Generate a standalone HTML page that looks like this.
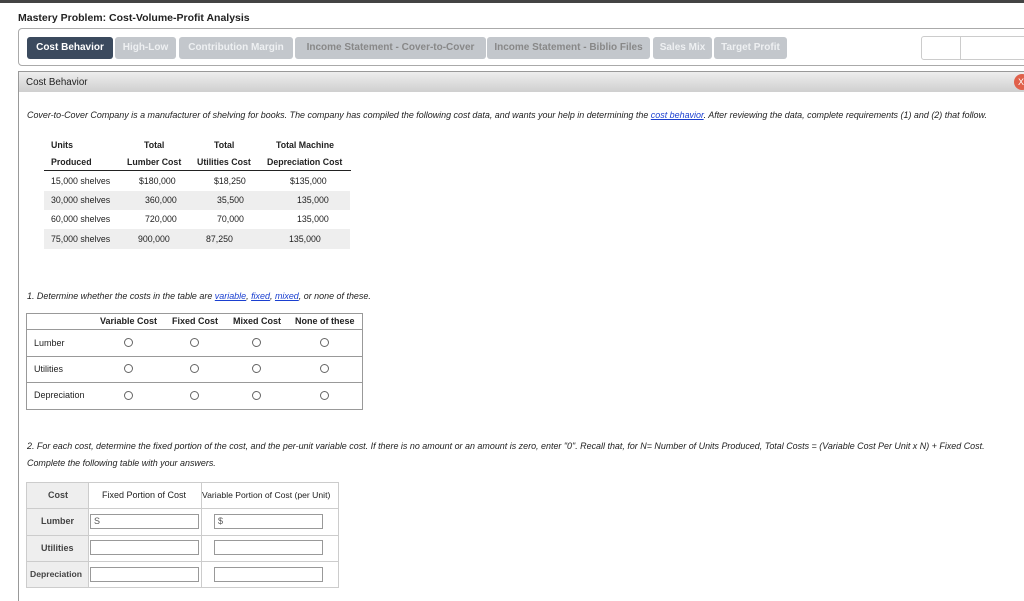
<!DOCTYPE html>
<html><head><meta charset="utf-8"><style>
*{margin:0;padding:0;box-sizing:border-box}
body{width:1024px;height:598px;overflow:hidden;background:#fff;font-family:"Liberation Sans",sans-serif;color:#222;position:relative}
.a{position:absolute;white-space:nowrap}
.tab{position:absolute;top:37px;height:22px;border-radius:3px;background:#c3c7cc;color:#eef0f2;font-weight:bold;font-size:10px;line-height:22px;text-align:center}
.it{font-style:italic;font-size:8.95px}
a{color:#1a3fd0;text-decoration:underline}
.t{font-size:8.8px}
.b{font-weight:bold}
.r{position:absolute;width:9px;height:9px;border:1px solid #666;border-radius:50%}
.inp{position:absolute;height:15px;border:1px solid #999;background:#fff;font-size:9px;color:#555;padding-left:3px;line-height:13px}
.f9{font-size:9px}
</style></head><body>
<div class="a" style="left:0;top:0;width:1024px;height:3px;background:#444"></div>
<div class="a b" style="left:18px;top:12px;font-size:10.5px;color:#222">Mastery Problem: Cost-Volume-Profit Analysis</div>
<div class="a" style="left:18px;top:28px;width:1020px;height:38px;border:1px solid #aaa;border-radius:4px"></div>
<div class="tab" style="left:27px;width:86px;background:#3b4a5e;color:#fff">Cost Behavior</div>
<div class="tab" style="left:115px;width:61px">High-Low</div>
<div class="tab" style="left:179px;width:114px">Contribution Margin</div>
<div class="tab" style="left:295px;width:191px;color:#888">Income Statement - Cover-to-Cover</div>
<div class="tab" style="left:487px;width:163px;color:#888">Income Statement - Biblio Files</div>
<div class="tab" style="left:653px;width:59px">Sales Mix</div>
<div class="tab" style="left:714px;width:73px">Target Profit</div>
<div class="a" style="left:921px;top:36px;width:110px;height:24px;border:1px solid #ccc;border-radius:3px"></div>
<div class="a" style="left:960px;top:36px;width:1px;height:24px;background:#ccc"></div>
<div class="a" style="left:18px;top:71px;width:1010px;height:530px;border-left:1px solid #999;border-top:1px solid #999"></div>
<div class="a" style="left:19px;top:72px;width:1005px;height:20px;background:linear-gradient(#eee,#cfcfcf);font-size:9.8px;line-height:22px;padding-left:7px">Cost Behavior</div>
<div class="a" style="left:1014px;top:74px;width:16px;height:16px;border-radius:50%;background:#e0604a;color:#fff;font-size:9px;line-height:16px;padding-left:4px">X</div>
<div class="a" style="left:-6px;top:224px;font-size:20px;color:#222">)</div>
<div class="a it" style="left:27px;top:110px">Cover-to-Cover Company is a manufacturer of shelving for books. The company has compiled the following cost data, and wants your help in determining the <a>cost behavior</a>. After reviewing the data, complete requirements (1) and (2) that follow.</div>

<div class="a" style="left:44px;top:191px;width:306px;height:19px;background:#eee"></div>
<div class="a" style="left:44px;top:229px;width:306px;height:20px;background:#eee"></div>
<div class="a" style="left:44px;top:170px;width:307px;height:1px;background:#222"></div>
<div class="a t b" style="left:51px;top:140px">Units</div>
<div class="a t b" style="left:51px;top:157px">Produced</div>
<div class="a t b" style="left:144px;top:140px">Total</div>
<div class="a t b" style="left:127px;top:157px">Lumber Cost</div>
<div class="a t b" style="left:214px;top:140px">Total</div>
<div class="a t b" style="left:197px;top:157px">Utilities Cost</div>
<div class="a t b" style="left:276px;top:140px">Total Machine</div>
<div class="a t b" style="left:267px;top:157px">Depreciation Cost</div>
<div class="a t" style="left:51px;top:176px">15,000 shelves</div><div class="a t" style="left:139px;top:176px">$180,000</div><div class="a t" style="left:214px;top:176px">$18,250</div><div class="a t" style="left:290px;top:176px">$135,000</div>
<div class="a t" style="left:51px;top:195px">30,000 shelves</div><div class="a t" style="left:145px;top:195px">360,000</div><div class="a t" style="left:217px;top:195px">35,500</div><div class="a t" style="left:297px;top:195px">135,000</div>
<div class="a t" style="left:51px;top:214px">60,000 shelves</div><div class="a t" style="left:145px;top:214px">720,000</div><div class="a t" style="left:217px;top:214px">70,000</div><div class="a t" style="left:297px;top:214px">135,000</div>
<div class="a t" style="left:51px;top:234px">75,000 shelves</div><div class="a t" style="left:138px;top:234px">900,000</div><div class="a t" style="left:206px;top:234px">87,250</div><div class="a t" style="left:289px;top:234px">135,000</div>

<div class="a it" style="left:27px;top:291px">1. Determine whether the costs in the table are <a>variable</a>, <a>fixed</a>, <a>mixed</a>, or none of these.</div>
<div class="a" style="left:26px;top:313px;width:337px;height:97px;border:1px solid #999"></div>
<div class="a" style="left:26px;top:329px;width:337px;height:1px;background:#999"></div>
<div class="a" style="left:26px;top:356px;width:337px;height:1px;background:#999"></div>
<div class="a" style="left:26px;top:382px;width:337px;height:1px;background:#999"></div>
<div class="a b f9" style="left:100px;top:316px">Variable Cost</div>
<div class="a b f9" style="left:172px;top:316px">Fixed Cost</div>
<div class="a b f9" style="left:233px;top:316px">Mixed Cost</div>
<div class="a b f9" style="left:295px;top:316px">None of these</div>
<div class="a f9" style="left:34px;top:338px">Lumber</div>
<div class="a f9" style="left:34px;top:364px">Utilities</div>
<div class="a f9" style="left:34px;top:390px">Depreciation</div>
<div class="r" style="left:124px;top:338px"></div><div class="r" style="left:190px;top:338px"></div><div class="r" style="left:252px;top:338px"></div><div class="r" style="left:320px;top:338px"></div>
<div class="r" style="left:124px;top:364px"></div><div class="r" style="left:190px;top:364px"></div><div class="r" style="left:252px;top:364px"></div><div class="r" style="left:320px;top:364px"></div>
<div class="r" style="left:124px;top:391px"></div><div class="r" style="left:190px;top:391px"></div><div class="r" style="left:252px;top:391px"></div><div class="r" style="left:320px;top:391px"></div>

<div class="a it" style="left:27px;top:441px">2. For each cost, determine the fixed portion of the cost, and the per-unit variable cost. If there is no amount or an amount is zero, enter "0". Recall that, for N= Number of Units Produced, Total Costs = (Variable Cost Per Unit x N) + Fixed Cost.</div>
<div class="a it" style="left:27px;top:458px">Complete the following table with your answers.</div>

<div class="a" style="left:26px;top:482px;width:313px;height:106px;border:1px solid #ccc"></div>
<div class="a" style="left:27px;top:483px;width:61px;height:104px;background:#eee"></div>
<div class="a" style="left:88px;top:482px;width:1px;height:106px;background:#ccc"></div>
<div class="a" style="left:201px;top:482px;width:1px;height:106px;background:#ccc"></div>
<div class="a" style="left:26px;top:508px;width:313px;height:1px;background:#ccc"></div>
<div class="a" style="left:26px;top:535px;width:313px;height:1px;background:#ccc"></div>
<div class="a" style="left:26px;top:561px;width:313px;height:1px;background:#ccc"></div>
<div class="a b f9" style="left:48px;top:490px;color:#444">Cost</div>
<div class="a f9" style="left:102px;top:490px">Fixed Portion of Cost</div>
<div class="a f9" style="left:202px;top:490px;font-size:8.6px">Variable Portion of Cost (per Unit)</div>
<div class="a b f9" style="left:41px;top:516px;color:#444">Lumber</div>
<div class="a b f9" style="left:41px;top:543px;color:#444">Utilities</div>
<div class="a b f9" style="left:30px;top:569px;color:#444;font-size:8.6px">Depreciation</div>
<div class="inp" style="left:90px;top:514px;width:109px">S</div>
<div class="inp" style="left:214px;top:514px;width:109px">$</div>
<div class="inp" style="left:90px;top:540px;width:109px"></div>
<div class="inp" style="left:214px;top:540px;width:109px"></div>
<div class="inp" style="left:90px;top:567px;width:109px"></div>
<div class="inp" style="left:214px;top:567px;width:109px"></div>
</body></html>
